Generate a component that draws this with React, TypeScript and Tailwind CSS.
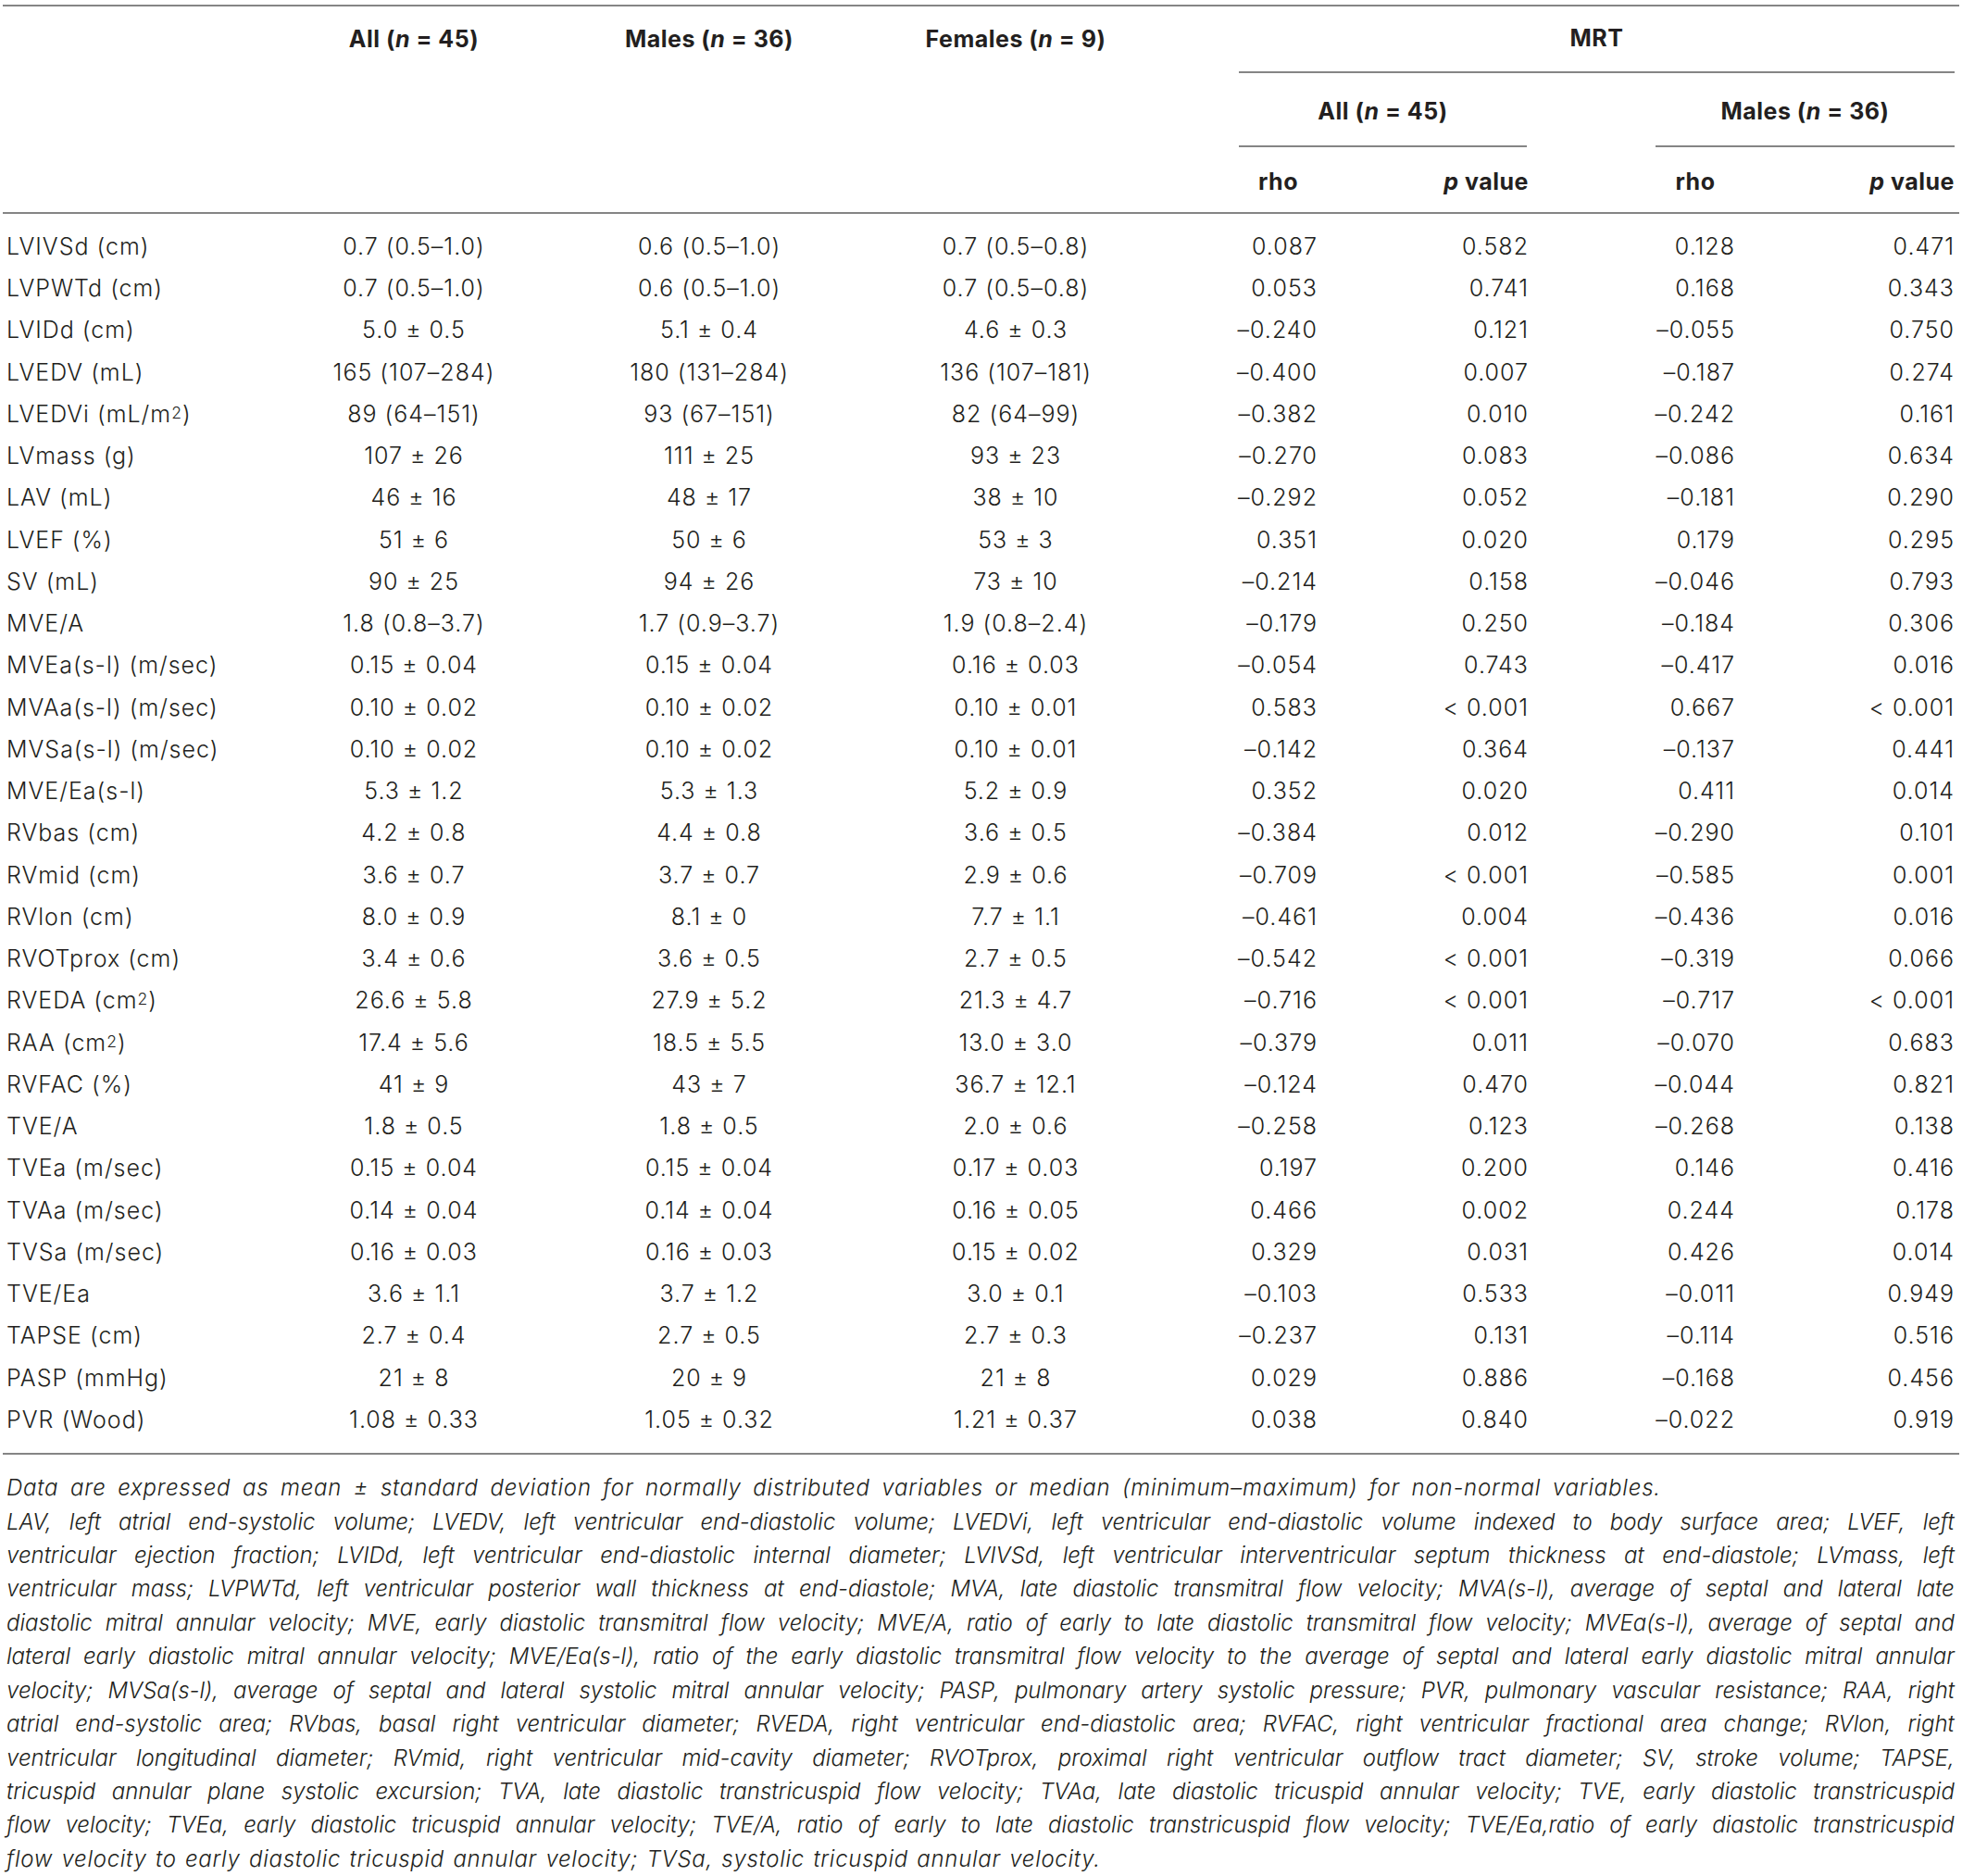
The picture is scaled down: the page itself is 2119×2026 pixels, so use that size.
import React from "react";

type Row = [React.ReactNode, string, string, string, string, string, string, string];

const sup = (s: string) => <sup className="text-[0.7em] relative -top-[0.1em]">{s}</sup>;

const rows: Row[] = [
  ["LVIVSd (cm)", "0.7 (0.5–1.0)", "0.6 (0.5–1.0)", "0.7 (0.5–0.8)", "0.087", "0.582", "0.128", "0.471"],
  ["LVPWTd (cm)", "0.7 (0.5–1.0)", "0.6 (0.5–1.0)", "0.7 (0.5–0.8)", "0.053", "0.741", "0.168", "0.343"],
  ["LVIDd (cm)", "5.0 ± 0.5", "5.1 ± 0.4", "4.6 ± 0.3", "–0.240", "0.121", "–0.055", "0.750"],
  ["LVEDV (mL)", "165 (107–284)", "180 (131–284)", "136 (107–181)", "–0.400", "0.007", "–0.187", "0.274"],
  [<>LVEDVi (mL/m{sup("2")})</>, "89 (64–151)", "93 (67–151)", "82 (64–99)", "–0.382", "0.010", "–0.242", "0.161"],
  ["LVmass (g)", "107 ± 26", "111 ± 25", "93 ± 23", "–0.270", "0.083", "–0.086", "0.634"],
  ["LAV (mL)", "46 ± 16", "48 ± 17", "38 ± 10", "–0.292", "0.052", "–0.181", "0.290"],
  ["LVEF (%)", "51 ± 6", "50 ± 6", "53 ± 3", "0.351", "0.020", "0.179", "0.295"],
  ["SV (mL)", "90 ± 25", "94 ± 26", "73 ± 10", "–0.214", "0.158", "–0.046", "0.793"],
  ["MVE/A", "1.8 (0.8–3.7)", "1.7 (0.9–3.7)", "1.9 (0.8–2.4)", "–0.179", "0.250", "–0.184", "0.306"],
  ["MVEa(s-l) (m/sec)", "0.15 ± 0.04", "0.15 ± 0.04", "0.16 ± 0.03", "–0.054", "0.743", "–0.417", "0.016"],
  ["MVAa(s-l) (m/sec)", "0.10 ± 0.02", "0.10 ± 0.02", "0.10 ± 0.01", "0.583", "< 0.001", "0.667", "< 0.001"],
  ["MVSa(s-l) (m/sec)", "0.10 ± 0.02", "0.10 ± 0.02", "0.10 ± 0.01", "–0.142", "0.364", "–0.137", "0.441"],
  ["MVE/Ea(s-l)", "5.3 ± 1.2", "5.3 ± 1.3", "5.2 ± 0.9", "0.352", "0.020", "0.411", "0.014"],
  ["RVbas (cm)", "4.2 ± 0.8", "4.4 ± 0.8", "3.6 ± 0.5", "–0.384", "0.012", "–0.290", "0.101"],
  ["RVmid (cm)", "3.6 ± 0.7", "3.7 ± 0.7", "2.9 ± 0.6", "–0.709", "< 0.001", "–0.585", "0.001"],
  ["RVlon (cm)", "8.0 ± 0.9", "8.1 ± 0", "7.7 ± 1.1", "–0.461", "0.004", "–0.436", "0.016"],
  ["RVOTprox (cm)", "3.4 ± 0.6", "3.6 ± 0.5", "2.7 ± 0.5", "–0.542", "< 0.001", "–0.319", "0.066"],
  [<>RVEDA (cm{sup("2")})</>, "26.6 ± 5.8", "27.9 ± 5.2", "21.3 ± 4.7", "–0.716", "< 0.001", "–0.717", "< 0.001"],
  [<>RAA (cm{sup("2")})</>, "17.4 ± 5.6", "18.5 ± 5.5", "13.0 ± 3.0", "–0.379", "0.011", "–0.070", "0.683"],
  ["RVFAC (%)", "41 ± 9", "43 ± 7", "36.7 ± 12.1", "–0.124", "0.470", "–0.044", "0.821"],
  ["TVE/A", "1.8 ± 0.5", "1.8 ± 0.5", "2.0 ± 0.6", "–0.258", "0.123", "–0.268", "0.138"],
  ["TVEa (m/sec)", "0.15 ± 0.04", "0.15 ± 0.04", "0.17 ± 0.03", "0.197", "0.200", "0.146", "0.416"],
  ["TVAa (m/sec)", "0.14 ± 0.04", "0.14 ± 0.04", "0.16 ± 0.05", "0.466", "0.002", "0.244", "0.178"],
  ["TVSa (m/sec)", "0.16 ± 0.03", "0.16 ± 0.03", "0.15 ± 0.02", "0.329", "0.031", "0.426", "0.014"],
  ["TVE/Ea", "3.6 ± 1.1", "3.7 ± 1.2", "3.0 ± 0.1", "–0.103", "0.533", "–0.011", "0.949"],
  ["TAPSE (cm)", "2.7 ± 0.4", "2.7 ± 0.5", "2.7 ± 0.3", "–0.237", "0.131", "–0.114", "0.516"],
  ["PASP (mmHg)", "21 ± 8", "20 ± 9", "21 ± 8", "0.029", "0.886", "–0.168", "0.456"],
  ["PVR (Wood)", "1.08 ± 0.33", "1.05 ± 0.32", "1.21 ± 0.37", "0.038", "0.840", "–0.022", "0.919"],
];

// footnote lines broken as in the printed table; all but the last are justified
const abbrevLines = [
  "LAV, left atrial end-systolic volume; LVEDV, left ventricular end-diastolic volume; LVEDVi, left ventricular end-diastolic volume indexed to body surface area; LVEF, left",
  "ventricular ejection fraction; LVIDd, left ventricular end-diastolic internal diameter; LVIVSd, left ventricular interventricular septum thickness at end-diastole; LVmass, left",
  "ventricular mass; LVPWTd, left ventricular posterior wall thickness at end-diastole; MVA, late diastolic transmitral flow velocity; MVA(s-l), average of septal and lateral late",
  "diastolic mitral annular velocity; MVE, early diastolic transmitral flow velocity; MVE/A, ratio of early to late diastolic transmitral flow velocity; MVEa(s-l), average of septal and",
  "lateral early diastolic mitral annular velocity; MVE/Ea(s-l), ratio of the early diastolic transmitral flow velocity to the average of septal and lateral early diastolic mitral annular",
  "velocity; MVSa(s-l), average of septal and lateral systolic mitral annular velocity; PASP, pulmonary artery systolic pressure; PVR, pulmonary vascular resistance; RAA, right",
  "atrial end-systolic area; RVbas, basal right ventricular diameter; RVEDA, right ventricular end-diastolic area; RVFAC, right ventricular fractional area change; RVlon, right",
  "ventricular longitudinal diameter; RVmid, right ventricular mid-cavity diameter; RVOTprox, proximal right ventricular outflow tract diameter; SV, stroke volume; TAPSE,",
  "tricuspid annular plane systolic excursion; TVA, late diastolic transtricuspid flow velocity; TVAa, late diastolic tricuspid annular velocity; TVE, early diastolic transtricuspid",
  "flow velocity; TVEa, early diastolic tricuspid annular velocity; TVE/A, ratio of early to late diastolic transtricuspid flow velocity; TVE/Ea,ratio of early diastolic transtricuspid",
];
const lastLine = "flow velocity to early diastolic tricuspid annular velocity; TVSa, systolic tricuspid annular velocity.";

const cols = "grid grid-cols-[293px_294px_344px_318px_82px_85px_228px_137px_86px_237px]";

const Line = () => <div className="mx-[3px] h-[2px] bg-[#858585]" />;

const N = ({ label, n }: { label: string; n: number }) => (
  <span className="whitespace-nowrap">
    {label} (<i>n</i> = {n})
  </span>
);

const JustifiedLine = ({ text }: { text: string }) => (
  <div className="flex justify-between whitespace-nowrap">
    {text.split(" ").map((w, i) => (
      <span key={i}>{w}</span>
    ))}
  </div>
);

export default function App() {
  return (
    <div className="w-[2119px] min-h-[2026px] bg-white pt-[5px] text-[#231f20] font-['Inter','Liberation_Sans',sans-serif]">
      <Line />

      {/* Header */}
      <div className={`${cols} grid-rows-[72px_80px_70px] px-[7px] text-[25px] font-bold tracking-[0.5px]`}>
        <div className="col-start-2 flex items-center justify-center"><N label="All" n={45} /></div>
        <div className="col-start-3 flex items-center justify-center"><N label="Males" n={36} /></div>
        <div className="col-start-4 flex items-center justify-center"><N label="Females" n={9} /></div>
        <div className="col-start-6 col-span-5 flex items-center justify-center border-b-2 border-[#858585]">MRT</div>

        <div className="row-start-2 col-start-6 col-span-2 flex items-center justify-center pt-[6px] mr-[2px] border-b-2 border-[#858585]"><N label="All" n={45} /></div>
        <div className="row-start-2 col-start-9 col-span-2 flex items-center justify-center pt-[6px] border-b-2 border-[#858585]"><N label="Males" n={36} /></div>

        <div className="row-start-3 col-start-6 flex items-center justify-center pt-[6px]">rho</div>
        <div className="row-start-3 col-start-7 flex items-center justify-end pt-[6px]"><span className="whitespace-nowrap"><i>p</i> value</span></div>
        <div className="row-start-3 col-start-9 flex items-center justify-center pt-[6px]">rho</div>
        <div className="row-start-3 col-start-10 flex items-center justify-end pt-[6px]"><span className="whitespace-nowrap"><i>p</i> value</span></div>
      </div>

      <Line />

      {/* Body */}
      <div className={`${cols} auto-rows-[45.25px] px-[7px] py-[13px] text-[25px] font-light tracking-[1px]`}>
        {rows.map((r, i) => (
          <React.Fragment key={i}>
            <div className="flex items-center whitespace-nowrap">{r[0]}</div>
            <div className="flex items-center justify-center whitespace-nowrap">{r[1]}</div>
            <div className="flex items-center justify-center whitespace-nowrap">{r[2]}</div>
            <div className="flex items-center justify-center whitespace-nowrap">{r[3]}</div>
            <div />
            <div className="flex items-center justify-end whitespace-nowrap">{r[4]}</div>
            <div className="flex items-center justify-end whitespace-nowrap">{r[5]}</div>
            <div />
            <div className="flex items-center justify-end whitespace-nowrap">{r[6]}</div>
            <div className="flex items-center justify-end whitespace-nowrap">{r[7]}</div>
          </React.Fragment>
        ))}
      </div>

      <Line />

      {/* Footnote */}
      <div className="pl-[7px] pr-[8px] pt-[18px] text-[24px] leading-[36.4px] italic font-light">
        <p className="whitespace-nowrap tracking-[0.8px] [word-spacing:5px]">
          Data are expressed as mean ± standard deviation for normally distributed variables or median (minimum–maximum) for non-normal variables.
        </p>
        {abbrevLines.map((l, i) => (
          <JustifiedLine key={i} text={l} />
        ))}
        <p className="whitespace-nowrap tracking-[0.7px] [word-spacing:2px]">{lastLine}</p>
      </div>
    </div>
  );
}
